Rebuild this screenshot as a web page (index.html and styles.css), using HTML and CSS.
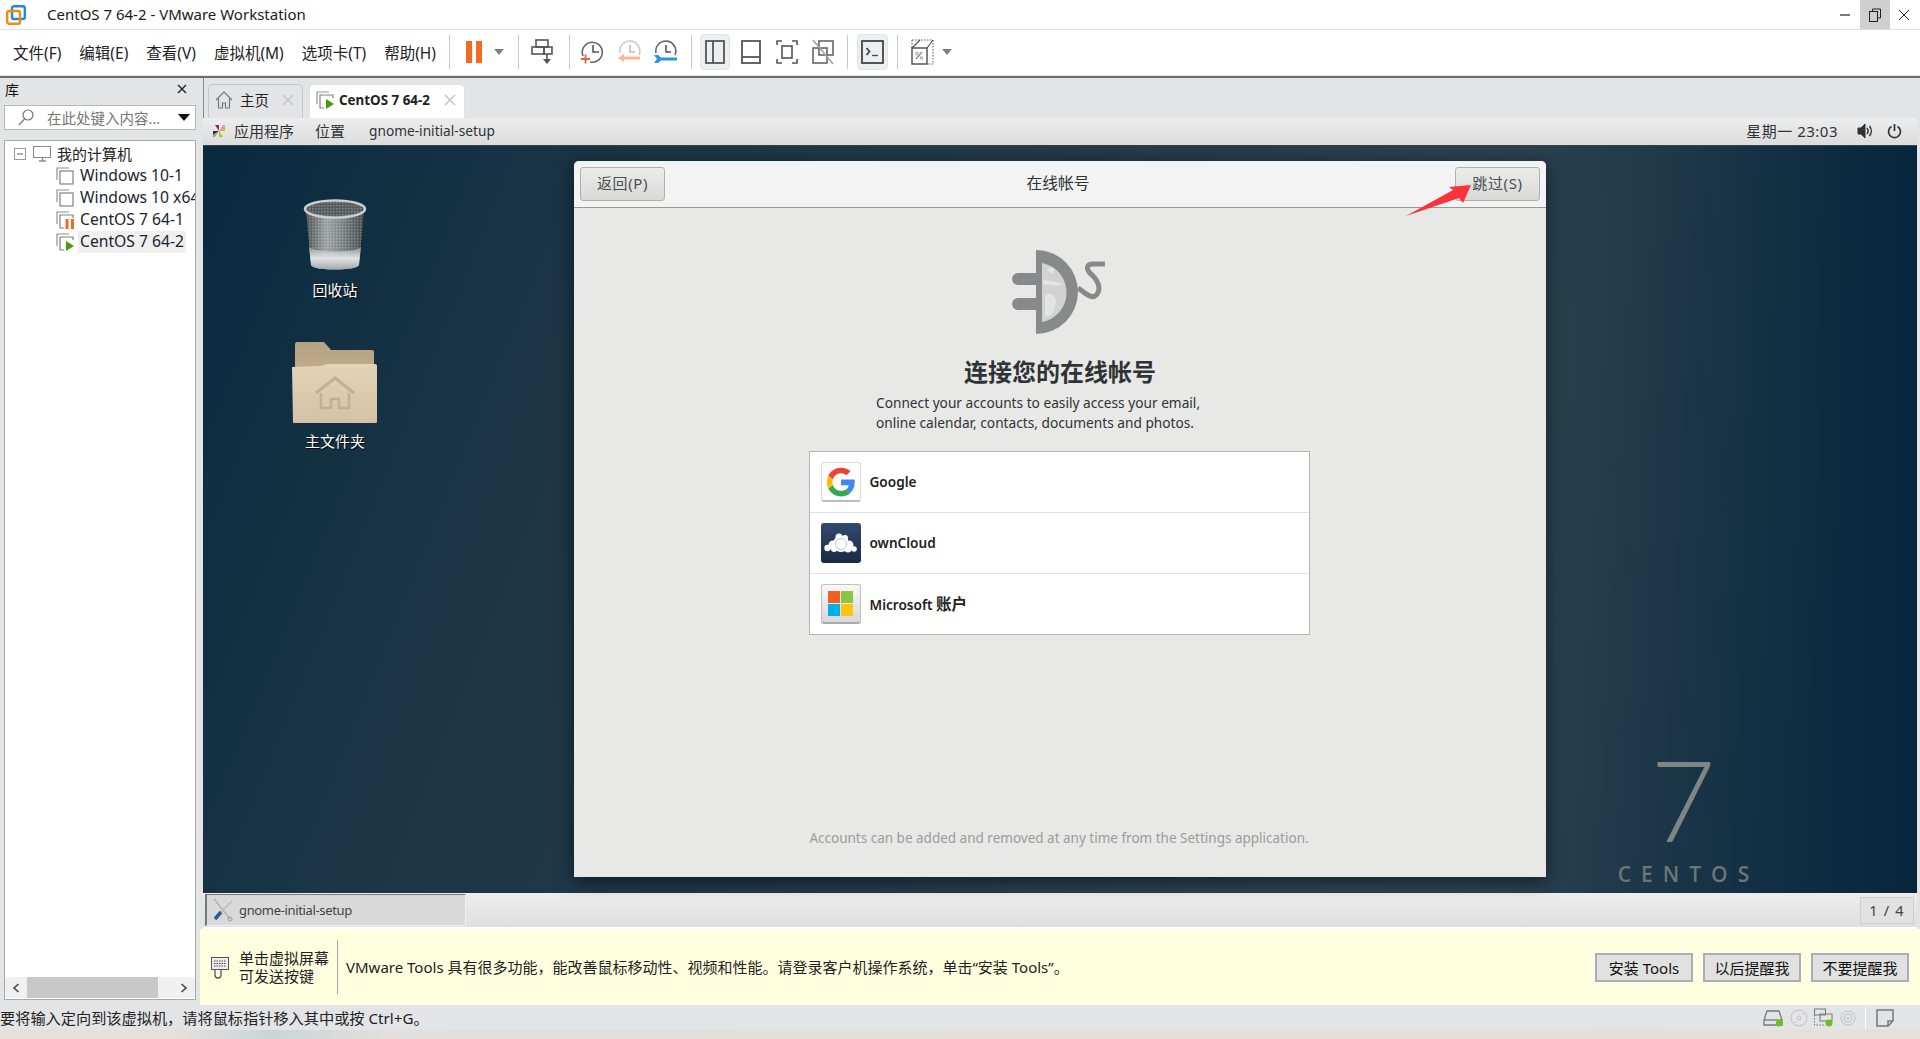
FILE: index.html
```html
<!DOCTYPE html>
<html lang="zh-CN">
<head>
  <meta charset="UTF-8">
  <title>CentOS 7 64-2 - VMware Workstation</title>
  <link rel="stylesheet" href="styles.css">
</head>
<body>
  <!-- title bar -->
  <div class="titlebar">
    <svg class="app-logo" width="20" height="20" viewBox="0 0 20 20"><rect x="6" y="1.200" width="12.800" height="12.800" rx="2" fill="none" stroke="#1b8fd0" stroke-width="2.400"/><rect x="1.200" y="6" width="12.800" height="12.800" rx="2" fill="none" stroke="#f08a12" stroke-width="2.400"/></svg>
    <span class="app-title">CentOS 7 64-2 - VMware Workstation</span>
    <div class="win-btns">
      <span class="win-btn"><svg width="12" height="12" viewBox="0 0 12 12"><path d="M1 6h10" stroke="#222" stroke-width="1.200"/></svg></span>
      <span class="win-btn win-btn-hover"><svg width="12" height="14" viewBox="0 0 12 14"><path d="M3.500 3V1h8v9H9" fill="none" stroke="#222"/><rect x=".5" y="3.500" width="8" height="10" fill="none" stroke="#222"/></svg></span>
      <span class="win-btn"><svg width="12" height="12" viewBox="0 0 12 12"><path d="M1 1l10 10M11 1L1 11" stroke="#222"/></svg></span>
    </div>
  </div>

  <!-- menu and toolbar -->
  <div class="toolbar">
    <nav class="menu">
      <span>文件(F)</span>
      <span>编辑(E)</span>
      <span>查看(V)</span>
      <span>虚拟机(M)</span>
      <span>选项卡(T)</span>
      <span>帮助(H)</span>
    </nav>
    <i class="sep"></i>
    <svg class="ml16" width="16" height="22" viewBox="0 0 16 22"><rect width="6" height="22" fill="#f26b21"/><rect x="10" width="6" height="22" fill="#f26b21"/></svg>
    <i class="caret ml12"></i>
    <i class="sep ml14"></i>
    <svg class="ml12" width="22" height="26" viewBox="0 0 22 26" fill="none" stroke="#555" stroke-width="1.600"><rect x="5" y="1" width="12" height="7"/><rect x="1" y="8" width="12" height="7"/><rect x="13" y="8" width="8" height="7"/><path d="M16 15v7"/><path d="M12 20h8l-4 5z" fill="#555" stroke="none"/></svg>
    <i class="sep ml16"></i>
    <svg class="ml10" width="24" height="26" viewBox="0 0 24 26" fill="none"><path d="M3 17a10 10 0 1 1 7 6" stroke="#666" stroke-width="1.600"/><path d="M13 6v7h6" stroke="#555" stroke-width="1.600"/><path d="M1 20h9M5.500 15.500v9" stroke="#d2663c" stroke-width="1.800"/></svg>
    <svg class="ml13" width="24" height="26" viewBox="0 0 24 26" fill="none"><path d="M3 14a10 10 0 1 1 19 2" stroke="#ccc" stroke-width="1.600"/><path d="M13 6v7h5" stroke="#bbb" stroke-width="1.600"/><path d="M1 19l6-4v2.500h16v3H7V23z" fill="#fbb596"/></svg>
    <svg class="ml12" width="24" height="26" viewBox="0 0 24 26" fill="none"><path d="M3 14a10 10 0 1 1 19 2" stroke="#666" stroke-width="1.600"/><path d="M13 6v7h5" stroke="#555" stroke-width="1.600"/><path d="M1 16h4l3 2.500h16v3H8L5 24H1l3-4z" fill="#2a97dc"/></svg>
    <i class="sep ml14"></i>
    <span class="tb-btn tb-on ml8"><svg width="20" height="24" viewBox="0 0 20 24" fill="none" stroke="#555" stroke-width="1.800"><rect x="1" y="1" width="18" height="22"/><path d="M8 1v22"/></svg></span>
    <span class="tb-btn ml6"><svg width="20" height="24" viewBox="0 0 20 24" fill="none" stroke="#555" stroke-width="1.800"><rect x="1" y="1" width="18" height="22"/><path d="M1 17h18"/></svg></span>
    <span class="tb-btn ml6"><svg width="22" height="24" viewBox="0 0 22 24" fill="none" stroke="#555" stroke-width="1.600"><path d="M1 5V1h5M16 1h5v4M21 19v4h-5M6 23H1v-4"/><rect x="6" y="6" width="10" height="12"/></svg></span>
    <span class="tb-btn ml6"><svg width="22" height="26" viewBox="0 0 22 26" fill="none" stroke="#666" stroke-width="1.600"><rect x="7" y="2" width="14" height="14"/><rect x="1" y="9" width="14" height="15"/><path d="M1 1l20 24" stroke="#9aa4ac"/></svg></span>
    <i class="sep ml9"></i>
    <span class="tb-btn tb-on tb-wide ml9"><svg width="23" height="24" viewBox="0 0 23 24" fill="none" stroke="#444"><rect x="1" y="1" width="21" height="22" stroke-width="1.800"/><path d="M5.500 8l3 3.500-3 3.500" stroke-width="1.800"/><path d="M11 15.500h6" stroke-width="1.300"/></svg></span>
    <i class="sep ml9"></i>
    <svg class="ml13" width="23" height="26" viewBox="0 0 23 26" fill="none" stroke="#555"><path d="M1 1h21v24h-5M1 1v8" stroke-dasharray="1.500 1.500"/><rect x="1" y="9" width="15" height="16" stroke-width="1.500"/><path d="M1 9l8-8M16 9l6-8" stroke-width="1.200"/><path d="M5 20l6-7" stroke="#999" stroke-width="1.500"/><circle cx="6" cy="14.500" r="1.300" stroke="#999"/><circle cx="10.500" cy="19" r="1.300" stroke="#999"/></svg>
    <i class="caret ml8"></i>
  </div>

  <div class="main">
    <!-- library -->
    <aside class="sidebar">
      <div class="lib-head"><span>库</span><svg width="10" height="10" viewBox="0 0 10 10"><path d="M1 1l8 8M9 1L1 9" stroke="#222" stroke-width="1.400"/></svg></div>
      <div class="lib-search">
        <svg width="16" height="17" viewBox="0 0 16 17" fill="none" stroke="#777" stroke-width="1.200"><circle cx="10" cy="6" r="5"/><path d="M6.500 10L1 16"/></svg>
        <span>在此处键入内容...</span>
        <i class="search-caret"></i>
      </div>
      <div class="tree">
        <div class="tree-body">
          <div class="tree-row tree-root">
            <svg width="12" height="12" viewBox="0 0 12 12"><rect x=".5" y=".5" width="11" height="11" fill="#fff" stroke="#9a9a9a"/><path d="M3 6h6" stroke="#4a6aa8"/></svg>
            <svg class="ml7" width="19" height="16" viewBox="0 0 19 16" fill="none" stroke="#8a8a8a"><rect x=".5" y=".5" width="17" height="11"/><path d="M6 15h7M9.500 12v3" stroke-width="1.400"/></svg>
            <span class="root-label">我的计算机</span>
          </div>
          <div class="tree-row tree-vm">
            <svg width="18" height="18" viewBox="0 0 18 18" fill="none"><path d="M13 1H1v12" stroke="#909090" stroke-width="1.200"/><rect x="4" y="4" width="13" height="13" stroke="#808080" stroke-width="1.200"/></svg>
            <span class="vm-label">Windows 10-1</span>
          </div>
          <div class="tree-row tree-vm">
            <svg width="18" height="18" viewBox="0 0 18 18" fill="none"><path d="M13 1H1v12" stroke="#909090" stroke-width="1.200"/><rect x="4" y="4" width="13" height="13" stroke="#808080" stroke-width="1.200"/></svg>
            <span class="vm-label">Windows 10 x64</span>
          </div>
          <div class="tree-row tree-vm">
            <svg width="18" height="18" viewBox="0 0 18 18" fill="none"><path d="M13 1H1v12" stroke="#909090" stroke-width="1.200"/><path d="M8 17H4V4h13v3" stroke="#808080" stroke-width="1.200"/><rect x="9.500" y="8" width="3" height="10" fill="#f26b21"/><rect x="15" y="8" width="3" height="10" fill="#f26b21"/></svg>
            <span class="vm-label">CentOS 7 64-1</span>
          </div>
          <div class="tree-row tree-vm">
            <svg width="18" height="18" viewBox="0 0 18 18" fill="none"><path d="M13 1H1v12" stroke="#909090" stroke-width="1.200"/><path d="M8 17H4V4h13v3" stroke="#808080" stroke-width="1.200"/><path d="M10 8l8 5-8 5z" fill="#4c9a0e"/></svg>
            <span class="vm-label vm-selected">CentOS 7 64-2</span>
          </div>
        </div>
        <div class="tree-scroll">
          <svg width="8" height="10" viewBox="0 0 8 10" fill="none"><path d="M6.500 1L2 5l4.500 4" stroke="#444" stroke-width="1.600"/></svg>
          <i class="scroll-thumb"></i>
          <svg width="8" height="10" viewBox="0 0 8 10" fill="none"><path d="M1.500 1L6 5 1.500 9" stroke="#444" stroke-width="1.600"/></svg>
        </div>
      </div>
    </aside>

    <div class="workspace">
      <!-- tabs -->
      <div class="tabs">
        <div class="tab tab-home">
          <svg width="18" height="18" viewBox="0 0 18 18" fill="none" stroke="#777" stroke-width="1.200"><path d="M1 9l8-8 8 8M3.500 7.500V17h4v-5h3v5h4V7.500"/></svg>
          <span class="tab-label">主页</span>
          <svg class="tab-x" width="12" height="12" viewBox="0 0 12 12"><path d="M1 1l10 10M11 1L1 11" stroke="#c4c4c4" stroke-width="1.500"/></svg>
        </div>
        <div class="tab tab-active">
          <svg width="18" height="18" viewBox="0 0 18 18" fill="none"><path d="M13 1H1v12" stroke="#909090" stroke-width="1.200"/><path d="M8 17H4V4h13v3" stroke="#808080" stroke-width="1.200"/><path d="M10 8l8 5-8 5z" fill="#4c9a0e"/></svg>
          <span class="tab-label tab-bold">CentOS 7 64-2</span>
          <svg class="tab-x" width="12" height="12" viewBox="0 0 12 12"><path d="M1 1l10 10M11 1L1 11" stroke="#c4c4c4" stroke-width="1.500"/></svg>
        </div>
      </div>

      <!-- guest top panel -->
      <div class="guest-bar">
        <svg width="14" height="14" viewBox="0 0 14 14"><path d="M7 7L3 1h4z" fill="#932279"/><path d="M7 7l6-4v4z" fill="#efa724"/><path d="M7 7l4 6H7z" fill="#9ccd2a"/><path d="M7 7l-6 4V7z" fill="#262577"/><path d="M7 7l4-6h2v2z" fill="#c9a0c0"/><path d="M7 7l-4 6H1v-2z" fill="#b0a060"/></svg>
        <span class="guest-item g-apps">应用程序</span>
        <span class="guest-item g-places">位置</span>
        <span class="guest-item g-app">gnome-initial-setup</span>
        <span class="guest-clock">星期一 23:03</span>
        <svg class="g-sound" width="16" height="16" viewBox="0 0 16 16" fill="none" stroke="#2e3436"><path d="M1 5h3l4-4v14l-4-4H1z" fill="#2e3436"/><path d="M10 5a5 5 0 0 1 0 6" stroke-width="1.500"/><path d="M12.500 3a8 8 0 0 1 0 10" stroke-width="1.500"/></svg>
        <svg class="g-power" width="15" height="16" viewBox="0 0 15 16" fill="none" stroke="#2e3436" stroke-width="1.700"><path d="M4.500 3.500a6 6 0 1 0 6 0"/><path d="M7.500 1v7"/></svg>
      </div>

      <!-- guest desktop -->
      <div class="desktop">
        <div class="desk-icon desk-trash">
          <svg width="64" height="74" viewBox="0 0 64 74">
            <defs>
              <linearGradient id="binBody" x1="0" x2="1" y1="0" y2="0"><stop offset="0" stop-color="#5e676a"/><stop offset=".35" stop-color="#c4caca"/><stop offset=".6" stop-color="#a0a8aa"/><stop offset="1" stop-color="#545c60"/></linearGradient>
              <linearGradient id="binBase" x1="0" x2="0" y1="0" y2="1"><stop offset="0" stop-color="#c2c6c6" stop-opacity=".5"/><stop offset=".5" stop-color="#e2e4e4"/><stop offset="1" stop-color="#a4a8a8"/></linearGradient>
              <pattern id="binMesh" width="3" height="3" patternUnits="userSpaceOnUse"><rect width="3" height="3" fill="#000" fill-opacity=".2"/><rect width="1.500" height="1.500" fill="#fff" fill-opacity=".25"/></pattern>
            </defs>
            <path d="M3 10l5 56c1 6 47 6 48 0l5-56z" fill="url(#binBody)"/>
            <path d="M3 10l5 56c1 6 47 6 48 0l5-56z" fill="url(#binMesh)"/>
            <path d="M6 48l2 18c1 6 47 6 48 0l2-18c-6 6-46 6-52 0z" fill="url(#binBase)"/>
            <ellipse cx="32" cy="10" rx="30" ry="8.500" fill="#6a7377" stroke="#ccd0d0" stroke-width="2.500"/>
            <ellipse cx="32" cy="10" rx="29" ry="7.500" fill="url(#binMesh)"/>
          </svg>
          <span class="desk-label">回收站</span>
        </div>
        <div class="desk-icon desk-home">
          <svg width="85" height="83" viewBox="0 0 85 83">
            <defs>
              <linearGradient id="folderBack" x1="0" x2="0" y1="0" y2="1"><stop offset="0" stop-color="#b5a283"/><stop offset="1" stop-color="#c5b08f"/></linearGradient>
              <linearGradient id="folderFront" x1="0" x2="0" y1="0" y2="1"><stop offset="0" stop-color="#e3d3b8"/><stop offset="1" stop-color="#d3c2a5"/></linearGradient>
            </defs>
            <path d="M3 3q0-2 2-2h27l7 8h41q2 0 2 2v30H3z" fill="url(#folderBack)"/>
            <path d="M0 26l29-1 6-2h48q2 0 2 2v56q0 1-2 1H2q-1 0-1-1z" fill="url(#folderFront)"/>
            <g fill="none" stroke="#c2b092" stroke-width="3"><path d="M24 52l19-15 19 15"/><path d="M29 52v15h10v-9h8v9h10V52" stroke-width="2.500"/></g>
          </svg>
          <span class="desk-label">主文件夹</span>
        </div>

        <div class="brand">
          <span class="brand-seven">7</span>
          <span class="brand-name">CENTOS</span>
        </div>

        <!-- initial setup window -->
        <section class="dialog">
          <header class="dialog-head">
            <button class="gbtn">返回(P)</button>
            <span class="dialog-title">在线帐号</span>
            <button class="gbtn">跳过(S)</button>
          </header>
          <div class="dialog-body">
            <svg class="plug" width="93" height="84" viewBox="0 0 93 84">
              <path d="M24 0a42 42 0 0 1 0 84z" fill="#868a8a"/>
              <path d="M30 13a30 30 0 0 1 0 59z" fill="#d2d2d0"/>
              <path d="M31 30c6 1 14 1 20 5-6 1-14 0-20-1zM35 19c4-3 8-1 7 2s-5 3-7-2zM33 45c5-2 10-1 11 6 0 7-4 14-7 15l-4 1z" fill="#e4e4e2"/>
              <path d="M6 23h18v12H6a6 6 0 0 1 0-12zM6 48h18v12H6a6 6 0 0 1 0-12z" fill="#868a8a"/>
              <path d="M66 38c6 4 12 11 17 8 6-4 5-13-2-20-7-6-8-12 0-12h12" fill="none" stroke="#868a8a" stroke-width="5"/>
            </svg>
            <h1 class="dialog-h">连接您的在线帐号</h1>
            <p class="dialog-p">Connect your accounts to easily access your email,<br>online calendar, contacts, documents and photos.</p>
            <div class="accounts">
              <div class="account">
                <span class="acc-icon acc-google">
                  <svg width="30" height="30" viewBox="0 0 48 48"><path d="M46 24.500c0-1.600-.1-3.100-.4-4.500H24v9h12.400c-.5 2.900-2.200 5.300-4.600 7l7.100 5.500C43.100 37.700 46 31.700 46 24.500z" fill="#4285f4"/><path d="M24 47c6.200 0 11.400-2 15-5.500l-7.200-5.500c-2 1.300-4.600 2.100-7.800 2.100-6 0-11-4-12.900-9.500l-7.400 5.700C7.400 41.800 15.100 47 24 47z" fill="#34a853"/><path d="M11.100 28.600c-.5-1.400-.7-3-.7-4.600s.3-3.200.7-4.600l-7.400-5.700C2.300 16.800 1.400 20.300 1.400 24s.9 7.200 2.300 10.300z" fill="#fbbc05"/><path d="M24 9.900c3.400 0 6.400 1.200 8.800 3.400l6.500-6.500C35.400 3.200 30.200 1 24 1 15.100 1 7.400 6.200 3.700 13.700l7.400 5.700C13 13.900 18 9.900 24 9.900z" fill="#ea4335"/></svg>
                </span>
                <span class="acc-name">Google</span>
              </div>
              <div class="account">
                <span class="acc-icon acc-cloud">
                  <svg width="34" height="20" viewBox="0 0 34 20" fill="#fff"><circle cx="17" cy="11" r="8"/><circle cx="9" cy="12" r="4.500"/><circle cx="25" cy="12" r="4.500"/><circle cx="3.500" cy="15" r="3.200"/><circle cx="30" cy="16" r="2.800"/><circle cx="15" cy="4" r="3.500"/><circle cx="21" cy="5" r="3"/><circle cx="10" cy="16" r="3"/><circle cx="24" cy="16" r="3.500"/><circle cx="17" cy="11" r="5.500" fill="none" stroke="#b9c4d4"/></svg>
                </span>
                <span class="acc-name">ownCloud</span>
              </div>
              <div class="account">
                <span class="acc-icon acc-ms">
                  <svg width="26" height="25" viewBox="0 0 26 25"><rect width="12" height="12" fill="#f25f22"/><rect x="13" width="12" height="12" fill="#8cc63f"/><rect y="13" width="12" height="12" fill="#00aeef"/><rect x="13" y="13" width="12" height="12" fill="#ffc20e"/></svg>
                </span>
                <span class="acc-name">Microsoft <span class="acc-cjk">账户</span></span>
              </div>
            </div>
            <p class="dialog-foot">Accounts can be added and removed at any time from the Settings application.</p>
          </div>
        </section>

        <!-- annotation over the skip button -->
        <svg class="red-arrow" width="66" height="33" viewBox="0 0 66 33"><path d="M0 32L47 6l-4-3L65 1 57 19l-4-5z" fill="#f8333c"/></svg>
      </div>

      <!-- guest bottom panel -->
      <div class="guest-task">
        <div class="task-tab">
          <svg width="22" height="24" viewBox="0 0 22 24" fill="none"><path d="M2 1l16 20" stroke="#b4b4b4" stroke-width="1.500"/><path d="M20 3L9 14" stroke="#bbb" stroke-width="1.500"/><path d="M9 14l-6 7" stroke="#2a5c9c" stroke-width="3.500"/><circle cx="18" cy="21" r="2" stroke="#999"/></svg>
          <span>gnome-initial-setup</span>
        </div>
        <span class="pager">1 / 4</span>
      </div>

      <!-- hint bar -->
      <div class="hint">
        <svg width="18" height="24" viewBox="0 0 18 24" fill="none" stroke="#555"><rect x=".5" y="2.500" width="17" height="12" fill="#eee"/><path d="M3 6h12M3 8.500h12M3 11h12" stroke-dasharray="1.500 1" stroke="#444"/><path d="M4 15v5a3 3 0 0 0 6 0v-5" stroke-width="1.300"/></svg>
        <div class="hint-left">单击虚拟屏幕<br>可发送按键</div>
        <i class="hint-sep"></i>
        <span class="hint-text">VMware Tools 具有很多功能，能改善鼠标移动性、视频和性能。请登录客户机操作系统，单击“安装 Tools”。</span>
        <button class="wbtn">安装 Tools</button>
        <button class="wbtn">以后提醒我</button>
        <button class="wbtn">不要提醒我</button>
      </div>
    </div>
  </div>

  <!-- status bar -->
  <div class="status">
    <span class="status-text">要将输入定向到该虚拟机，请将鼠标指针移入其中或按 Ctrl+G。</span>
    <div class="status-icons">
      <svg width="21" height="18" viewBox="0 0 21 18" fill="none" stroke="#777" stroke-width="1.300"><path d="M4 2h12l3 9v5H1v-5z"/><path d="M1 11h18"/><circle cx="16.500" cy="14" r="3.500" fill="#6fbe1e" stroke="none"/></svg>
      <svg class="ml6" width="18" height="18" viewBox="0 0 18 18" fill="none" stroke="#c2c2c2"><circle cx="9" cy="9" r="8"/><circle cx="9" cy="9" r="2"/><path d="M12 4l2 2M4 12l2 2"/></svg>
      <svg class="ml6" width="19" height="19" viewBox="0 0 19 19" fill="none" stroke="#777"><rect x=".5" y="1" width="11" height="6"/><rect x="6" y="6" width="12" height="7"/><path d="M.5 7v10h11" stroke-dasharray="1.500 1.500"/><circle cx="15" cy="15" r="3.500" fill="#6fbe1e" stroke="none"/></svg>
      <svg class="ml7" width="16" height="16" viewBox="0 0 16 16" fill="none" stroke="#c2c2c2"><circle cx="8" cy="8" r="7"/><circle cx="8" cy="8" r="4"/><circle cx="8" cy="8" r="1"/></svg>
      <i class="status-sep"></i>
      <svg class="ml10" width="18" height="18" viewBox="0 0 18 18" fill="none" stroke="#777" stroke-width="1.500"><path d="M1 1h16v11l-5 5H1z"/><path d="M17 12h-5v5"/></svg>
    </div>
  </div>
  <div class="strip"></div>
</body>
</html>
```

FILE: styles.css
```css
* {
  box-sizing: border-box;
}
html, body {
  margin: 0;
  height: 100%;
}
body {
  width: 1920px;
  height: 1039px;
  overflow: hidden;
  background-color: #e3e4e6;
  font-family: "Noto Sans", "Noto Sans CJK SC", sans-serif;
  font-size: 14px;
  color: #111;
  display: flex;
  flex-direction: column;
}
i {
  display: block;
  flex: none;
}
svg {
  display: block;
  flex: none;
}
.ml5 { margin-left: 5px; }
.ml6 { margin-left: 6px; }
.ml7 { margin-left: 7px; }
.ml8 { margin-left: 8px; }
.ml9 { margin-left: 9px; }
.ml10 { margin-left: 10px; }
.ml12 { margin-left: 12px; }
.ml13 { margin-left: 13px; }
.ml14 { margin-left: 14px; }
.ml16 { margin-left: 16px; }

/* title bar */
.titlebar {
  height: 29px;
  flex: none;
  background-color: #fff;
  display: flex;
  align-items: center;
  padding-left: 6px;
}
.app-title {
  margin-left: 21px;
  padding-bottom: 2px;
  font-size: 15px;
  color: #1a1a1a;
}
.win-btns {
  margin-left: auto;
  display: flex;
  height: 29px;
  padding-right: 1px;
}
.win-btn {
  width: 30px;
  display: flex;
  align-items: center;
  justify-content: center;
}
.win-btn:last-child {
  margin-left: -1px;
}
.win-btn-hover {
  background-color: #cfcfcf;
}

/* toolbar */
.toolbar {
  height: 49px;
  flex: none;
  background-color: #fff;
  border-top: 1px solid #e0e0e0;
  display: flex;
  align-items: center;
  padding-bottom: 4px;
  box-shadow: inset 0 -2px 0 #6e6e6e, inset 0 -3px 0 #e6e6e6;
}
.menu {
  width: 449px;
  padding-left: 13px;
  display: flex;
  gap: 18px;
  font-size: 15.5px;
  color: #222;
  flex: none;
}
.sep {
  width: 1px;
  height: 34px;
  background-color: #c8c8c8;
}
.caret {
  width: 0;
  height: 0;
  border-left: 5px solid transparent;
  border-right: 5px solid transparent;
  border-top: 6px solid #808080;
}
.tb-btn {
  width: 30px;
  height: 36px;
  border-radius: 4px;
  display: flex;
  align-items: center;
  justify-content: center;
  flex: none;
}
.tb-wide {
  width: 31px;
}
.tb-on {
  background-color: #eceef0;
  border: 1px solid #e2e4e6;
}

/* main */
.main {
  height: 927px;
  flex: none;
  display: flex;
}
.sidebar {
  width: 200px;
  flex: none;
  padding: 0 4px 5px;
  display: flex;
  flex-direction: column;
}
.lib-head {
  height: 27px;
  display: flex;
  align-items: center;
  justify-content: space-between;
  padding: 0 9px 6px 1px;
  font-size: 14px;
}
.lib-search {
  height: 25px;
  background-color: #fff;
  border: 1px solid #b8b8b8;
  display: flex;
  align-items: center;
  padding-left: 13px;
  color: #777;
  font-size: 14.5px;
}
.lib-search span {
  margin-left: 13px;
}
.search-caret {
  margin-left: auto;
  margin-right: 5px;
  border-left: 6px solid transparent;
  border-right: 6px solid transparent;
  border-top: 7px solid #111;
}
.tree {
  margin-top: 10px;
  flex: 1;
  min-height: 0;
  background-color: #fff;
  border: 1px solid #a8a8a8;
  display: flex;
  flex-direction: column;
}
.tree-body {
  flex: 1;
  padding-top: 2px;
  overflow: hidden;
}
.tree-row {
  height: 22px;
  display: flex;
  align-items: center;
  white-space: nowrap;
  font-size: 15.7px;
}
.tree-root {
  padding-left: 9px;
}
.root-label {
  margin-left: 5px;
  padding-bottom: 2px;
  font-size: 15px;
  color: #222;
}
.tree-vm {
  padding-left: 51px;
}
.vm-label {
  margin-left: 4px;
  padding: 0 2px;
  line-height: 21px;
  height: 22px;
  color: #1a2530;
}
.vm-selected {
  background-color: #efefef;
}
.tree-scroll {
  height: 21px;
  flex: none;
  background-color: #f0f0f0;
  display: flex;
  align-items: center;
  justify-content: space-between;
  padding: 0 7px;
  margin-bottom: 1px;
}
.scroll-thumb {
  width: 131px;
  height: 100%;
  margin-right: 16px;
  background-color: #c8c8c8;
}

/* workspace */
.workspace {
  flex: 1;
  min-width: 0;
  display: flex;
  flex-direction: column;
}
.tabs {
  height: 40px;
  flex: none;
  margin: 0 3px;
  border-left: 1px solid #888;
  padding: 6px 0 0 4px;
  display: flex;
  gap: 6px;
}
.tab {
  height: 34px;
  border: 1px solid #c8c8c8;
  border-bottom: none;
  border-radius: 5px 5px 0 0;
  display: flex;
  align-items: center;
  padding: 0 0 4px 6px;
}
.tab-home {
  width: 95px;
}
.tab-active {
  width: 156px;
  background-color: #fff;
  border-color: #e0e0e0;
}
.tab-label {
  margin-left: 7px;
  font-size: 14.5px;
  color: #222;
}
.tab-bold {
  margin-left: 5px;
  font-size: 13.4px;
  font-weight: 700;
}
.tab-x {
  margin-left: auto;
  margin-right: 8px;
}
.guest-bar {
  height: 27px;
  flex: none;
  margin: 0 3px;
  padding: 0 0 2px 9px;
  background: linear-gradient(#ededed, #dcdcdc);
  display: flex;
  align-items: center;
  font-size: 15px;
  color: #2e3436;
}
.g-apps { margin-left: 8px; }
.g-places { margin-left: 21px; }
.g-app { margin-left: 24px; font-size: 13.7px; }
.guest-clock { margin-left: auto; letter-spacing: 0.5px; }
.g-sound { margin-left: 19px; }
.g-power { margin-left: 14px; margin-right: 15px; }

/* desktop */
.desktop {
  position: relative;
  height: 748px;
  flex: none;
  margin: 0 3px;
  background:
    linear-gradient(90deg, rgba(8, 38, 60, 0) 76%, #07263c 100%),
    linear-gradient(112deg, #0a2a40 0%, #1c3646 22%, #243a4a 45%, #2e4550 72%, #233b4f 100%);
  border-top: 1px solid #3a4248;
}
.desk-icon {
  position: absolute;
  width: 120px;
  display: flex;
  flex-direction: column;
  align-items: center;
}
.desk-trash {
  left: 72px;
  top: 53px;
}
.desk-home {
  left: 71px;
  top: 195px;
}
.desk-label {
  margin-top: 7px;
  color: #fff;
  font-size: 15px;
  line-height: 20px;
  text-shadow: 1px 1px 1px #000;
}
.desk-home .desk-label {
  margin-left: 2px;
}
.brand {
  position: absolute;
  left: 1414px;
  top: 608px;
  width: 132px;
  display: flex;
  flex-direction: column;
  align-items: center;
  color: #7d8585;
}
.brand-seven {
  font-family: Lato, sans-serif;
  font-weight: 300;
  font-size: 112px;
  line-height: 90px;
  height: 90px;
}
.brand-name {
  margin-top: 18px;
  margin-right: -11px;
  font-family: "Open Sans", sans-serif;
  font-weight: 600;
  font-size: 21px;
  line-height: 24px;
  letter-spacing: 10px;
  color: #6c7578;
}
.dialog {
  position: absolute;
  left: 371px;
  top: 15px;
  width: 972px;
  height: 716px;
  border-radius: 5px 5px 0 0;
  overflow: hidden;
  background-color: #e8e8e6;
  box-shadow: 0 4px 18px rgba(0, 0, 0, 0.55);
  display: flex;
  flex-direction: column;
}
.dialog-head {
  height: 47px;
  flex: none;
  background-color: #f3f3f3;
  border-bottom: 1px solid #989894;
  display: flex;
  align-items: center;
  justify-content: space-between;
  padding: 0 6px;
}
.dialog-title {
  padding-bottom: 3px;
  font-size: 15.8px;
  color: #2e3436;
  margin-left: -4px;
}
.gbtn {
  width: 85px;
  height: 34px;
  border: 1px solid #b0b0ae;
  border-radius: 3px;
  background: linear-gradient(#ececea, #d8d8d6);
  font-family: "Noto Sans", "Noto Sans CJK SC", sans-serif;
  font-size: 15px;
  letter-spacing: 0.6px;
  color: #4a5052;
  padding: 0 0 3px;
}
.dialog-body {
  flex: 1;
  display: flex;
  flex-direction: column;
  align-items: center;
  padding-top: 42px;
  min-height: 0;
}
.plug {
  margin-left: -4px;
}
.dialog-h {
  margin: 21px 0 0;
  font-size: 24px;
  line-height: 34px;
  font-weight: 700;
  color: #2e3436;
}
.dialog-p {
  margin: 4px 0 0;
  width: 502px;
  padding-left: 67px;
  font-size: 13.7px;
  line-height: 20px;
  color: #2e3436;
}
.accounts {
  margin-top: 18px;
  margin-left: -2px;
  width: 501px;
  background-color: #fff;
  border: 1px solid #b4b4b2;
}
.account {
  height: 61px;
  display: flex;
  align-items: center;
  padding-left: 11px;
  border-top: 1px solid #e0e0e0;
}
.account:first-child {
  border-top: none;
  height: 60px;
}
.acc-icon {
  width: 40px;
  height: 40px;
  border-radius: 3px;
  display: flex;
  align-items: center;
  justify-content: center;
  flex: none;
}
.acc-google {
  background-color: #fff;
  border: 1px solid #dcdcdc;
  border-bottom: 2px solid #bbb;
}
.acc-cloud {
  background: linear-gradient(#33496f, #1a2a45);
}
.acc-ms {
  background: linear-gradient(#f8f8f8, #d8d8d8);
  border: 1px solid #c0c0c0;
  border-bottom: 2px solid #aaa;
}
.acc-name {
  margin-left: 9px;
  padding-bottom: 2px;
  font-size: 13.6px;
  font-weight: 600;
  color: #222;
}
.acc-cjk {
  font-size: 15.5px;
}
.dialog-foot {
  margin: auto 0 29px;
  font-size: 13.5px;
  line-height: 20px;
  color: #9a9c9c;
  transform: translateX(-1px);
}
.red-arrow {
  position: absolute;
  left: 1203px;
  top: 38px;
}

/* guest bottom panel */
.guest-task {
  height: 36px;
  flex: none;
  margin: 0 3px;
  background: linear-gradient(#ededed, #dfdfdf);
  display: flex;
  align-items: center;
  padding: 0 3px 0 2px;
  border-bottom: 2px solid #fff;
}
.task-tab {
  width: 261px;
  height: 32px;
  background-color: #d9d9d9;
  border: 1px solid #f0f0f0;
  border-left: 2px solid #777;
  border-top: 1px solid #777;
  display: flex;
  align-items: center;
  padding-left: 5px;
  font-size: 14px;
  color: #444;
}
.task-tab span {
  margin-left: 5px;
  font-size: 13px;
  letter-spacing: -0.35px;
}
.pager {
  margin-left: auto;
  width: 54px;
  height: 27px;
  background-color: #e2e2e2;
  border: 1px solid #cfcfcf;
  display: flex;
  align-items: center;
  justify-content: center;
  font-size: 14.5px;
  letter-spacing: 1.2px;
  color: #444;
}

/* hint bar */
.hint {
  height: 76px;
  flex: none;
  background-color: #ffffe0;
  display: flex;
  align-items: center;
  padding: 0 11px;
}
.hint-left {
  margin-left: 10px;
  font-size: 15px;
  line-height: 18px;
  color: #222;
}
.hint-sep {
  width: 1px;
  height: 54px;
  margin-left: 8px;
  background-color: #a8a8a8;
}
.hint-text {
  margin-left: 8px;
  padding-bottom: 2px;
  font-size: 15px;
  color: #222;
}
.wbtn {
  width: 98px;
  height: 29px;
  margin-left: 10px;
  background-color: #e1e1e1;
  border: 2px solid #adadad;
  outline: 1px solid #fff;
  font-family: "Noto Sans", "Noto Sans CJK SC", sans-serif;
  font-size: 15px;
  color: #111;
  padding: 0;
}
.hint-text + .wbtn {
  margin-left: auto;
}

/* status bar */
.status {
  height: 25px;
  flex: none;
  background-color: #e3e4e6;
  display: flex;
  align-items: center;
  padding-right: 26px;
}
.status-text {
  padding-bottom: 2px;
  font-size: 15.2px;
  color: #222;
}
.status-icons {
  margin-left: auto;
  display: flex;
  align-items: center;
}
.status-sep {
  width: 1px;
  height: 22px;
  margin-left: 9px;
  background-color: #fff;
}
.strip {
  flex: 1;
  background: linear-gradient(90deg, #e6e0dc 0, #e6e0dc 9%, #c9d6d6 14%, #e2dfdc 20%, #e6dfda 100%);
}
```
